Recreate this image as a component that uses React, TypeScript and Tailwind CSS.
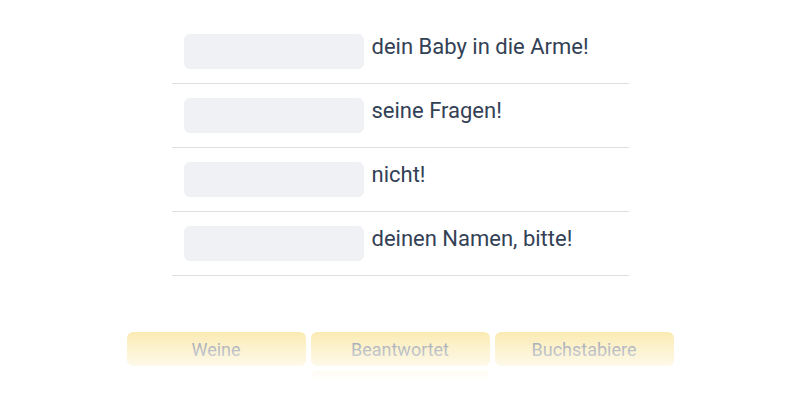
import React from "react";

const rows = ["dein Baby in die Arme!", "seine Fragen!", "nicht!", "deinen Namen, bitte!"];
const words = ["Weine", "Beantwortet", "Buchstabiere", "Nimm"];

export default function App() {
  return (
    <div className="w-[800px] h-[400px] bg-white overflow-hidden" style={{ fontFamily: "Roboto, 'Liberation Sans', sans-serif" }}>
      <div className="w-[457px] mx-auto pt-[20px]">
        {rows.map((r) => (
          <div key={r} className="h-[64px] flex items-center gap-2 px-3 border-b border-[#dedfe2]">
            <div className="w-[180px] h-[35px] rounded-md bg-[#f0f1f5]" />
            <span className="text-[22px] text-[#334155] leading-none -mt-[9px]">{r}</span>
          </div>
        ))}
      </div>
      <div className="relative mt-[56px]">
        <div className="w-[547px] mx-auto flex flex-wrap justify-center gap-[5px]">
          {words.map((w) => (
            <div key={w} className="w-[179px] h-[34px] rounded-md bg-[#f8dc7a] flex items-center justify-center text-[18px] text-[#334155]">
              {w}
            </div>
          ))}
        </div>
        <div className="absolute left-0 right-0 -top-[32px] h-[100px] bg-gradient-to-b from-white/0 via-white/60 via-[45%] to-white to-[80%]" />
      </div>
    </div>
  );
}
